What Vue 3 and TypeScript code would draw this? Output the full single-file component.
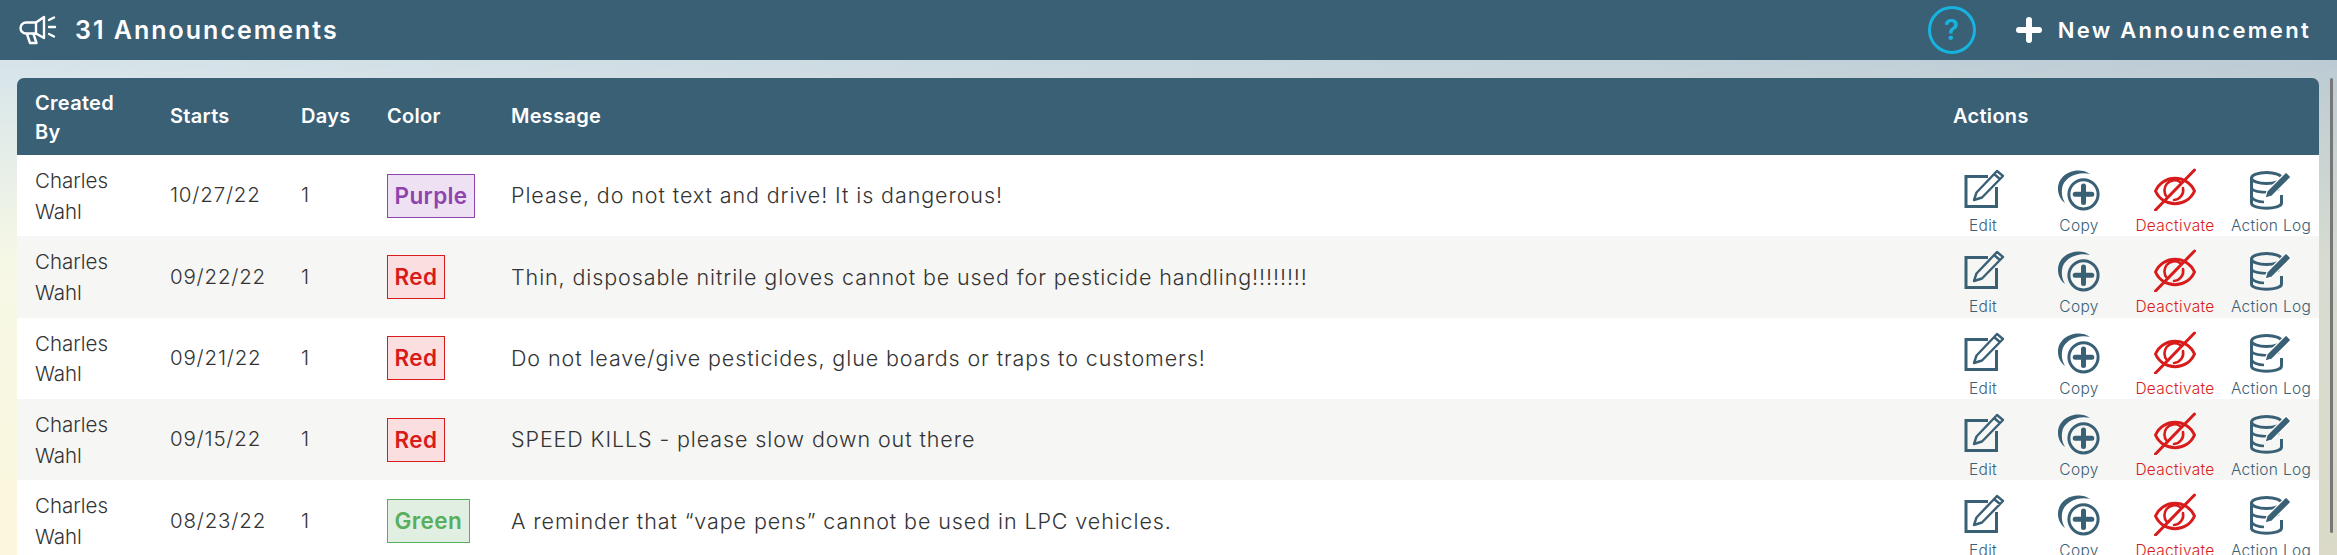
<script setup lang="ts">
interface Announcement {
  by: string;
  starts: string;
  days: number;
  color: "Purple" | "Red" | "Green";
  message: string;
}

const rows: Announcement[] = [
  { by: "Charles Wahl", starts: "10/27/22", days: 1, color: "Purple", message: "Please, do not text and drive! It is dangerous!" },
  { by: "Charles Wahl", starts: "09/22/22", days: 1, color: "Red", message: "Thin, disposable nitrile gloves cannot be used for pesticide handling!!!!!!!!" },
  { by: "Charles Wahl", starts: "09/21/22", days: 1, color: "Red", message: "Do not leave/give pesticides, glue boards or traps to customers!" },
  { by: "Charles Wahl", starts: "09/15/22", days: 1, color: "Red", message: "SPEED KILLS - please slow down out there" },
  { by: "Charles Wahl", starts: "08/23/22", days: 1, color: "Green", message: "A reminder that “vape pens” cannot be used in LPC vehicles." },
];
</script>

<template>
  <div class="page">
    <header class="topbar">
      <div class="title">
        <svg class="megaphone" width="40" height="30" viewBox="0 0 40 30" fill="none" stroke="#fff" stroke-width="2.4" stroke-linejoin="round" stroke-linecap="round">
          <path d="M8 7.5 H18 L26 2 V23 L18 18.5 H8 A5.5 5.5 0 0 1 8 7.5 Z" />
          <path d="M18 7.5 V18.5" />
          <path d="M9 19 L12 28 H18.5 L15.5 19" />
          <path d="M31 5 L36 2.5 M31 12 H37 M31 19 L36 21.5" />
        </svg>
        <span>31 Announcements</span>
      </div>
      <div class="tools">
        <div class="help">?</div>
        <div class="new">
          <svg width="26" height="26" viewBox="0 0 26 26" stroke="#fff" stroke-width="6" stroke-linecap="round">
            <path d="M13 3 V23 M3 13 H23" />
          </svg>
          <span>New Announcement</span>
        </div>
      </div>
    </header>

    <main class="content">
      <table class="grid">
        <colgroup>
          <col class="c-by" />
          <col class="c-starts" />
          <col class="c-days" />
          <col class="c-color" />
          <col />
          <col class="c-actions" />
        </colgroup>
        <thead>
          <tr>
            <th class="by">Created By</th>
            <th>Starts</th>
            <th>Days</th>
            <th>Color</th>
            <th>Message</th>
            <th>Actions</th>
          </tr>
        </thead>
        <tbody>
          <tr v-for="(row, i) in rows" :key="i">
            <td class="by">{{ row.by }}</td>
            <td class="date">{{ row.starts }}</td>
            <td>{{ row.days }}</td>
            <td>
              <span class="badge" :class="row.color.toLowerCase()">{{ row.color }}</span>
            </td>
            <td class="msg">{{ row.message }}</td>
            <td class="actions-cell">
              <div class="actions">
                <div class="action">
                  <svg width="44" height="44" viewBox="0 0 44 44" fill="none" stroke="#3a6076">
                    <path d="M27 9.5 H5 V39.5 H35.5 V20" stroke-width="3" />
                    <path d="M13 33 L15.5 25.5 L36 4 L42 9 L21 30.5 Z M33 7 L39 12" stroke-width="2.4" stroke-linejoin="round" />
                  </svg>
                  <span>Edit</span>
                </div>
                <div class="action">
                  <svg width="44" height="44" viewBox="0 0 44 44" fill="none" stroke="#3a6076">
                    <circle cx="26.5" cy="27.3" r="14.6" stroke-width="3" />
                    <path d="M26.5 19 V35.6 M18.2 27.3 H34.8" stroke-width="5" stroke-linecap="round" />
                    <path d="M33 7 C22 -1 1 5 1 22 C1 28 4 33 8 36 C5 31 4.5 27 5 22 C6 11 20 4 33 7 Z" fill="#3a6076" stroke="none" />
                  </svg>
                  <span>Copy</span>
                </div>
                <div class="action danger">
                  <svg width="44" height="44" viewBox="0 0 44 44" fill="none" stroke="#d81b1b" stroke-linecap="round">
                    <path d="M2.5 24 C10 7 34 7 41.5 24 C34 41 10 41 2.5 24 Z" stroke-width="3" />
                    <path d="M14 30 A10 10 0 0 1 27 15" stroke-width="2.6" />
                    <path d="M30 21 A10 10 0 0 1 21 33" stroke-width="2.6" />
                    <path d="M2.5 43 L41.5 3" stroke-width="3" />
                  </svg>
                  <span>Deactivate</span>
                </div>
                <div class="action">
                  <svg width="44" height="44" viewBox="0 0 44 44" fill="none" stroke="#3a6076" stroke-width="3">
                    <ellipse cx="17.5" cy="11" rx="15" ry="5.5" />
                    <path d="M2.5 11 V36 C2.5 43 32.500 43 32.500 36 V28" />
                    <path d="M2.5 20 C2.5 26 22 27 30 22 M2.5 28.500 C2.5 33 10 35 15 35" stroke-width="2.6" />
                    <path d="M16 31 L18 24 L37 5 L42 10 L23 29 Z" fill="#3a6076" stroke="#fff" stroke-width="1.2" stroke-linejoin="round" />
                  </svg>
                  <span>Action Log</span>
                </div>
              </div>
            </td>
          </tr>
        </tbody>
      </table>
    </main>
    <div class="scrollbar"></div>
  </div>
</template>

<style>
html,
body {
  margin: 0;
  overflow: hidden;
}
</style>

<style scoped>
.page {
  position: relative;
  height: 100vh;
  overflow: hidden;
  font-family: Inter, "Noto Sans", sans-serif;
  color: #333;
  background:
    linear-gradient(to right, rgba(70, 90, 110, 0) 0%, rgba(70, 90, 110, 0.18) 100%),
    linear-gradient(to bottom, #d6e4ea 60px, #f6f8e6 260px, #fcf6dc 555px);
}
.topbar {
  height: 60px;
  background: #3a6076;
  color: #fff;
  display: flex;
  align-items: center;
  justify-content: space-between;
  padding: 0 26px 0 18px;
  font-weight: 600;
}
.title {
  display: flex;
  align-items: center;
  gap: 17px;
  font-size: 25px;
  letter-spacing: 2px;
}
.tools {
  display: flex;
  align-items: center;
}
.help {
  width: 42px;
  height: 42px;
  border: 3px solid #17b3df;
  border-radius: 50%;
  color: #17b3df;
  display: flex;
  align-items: center;
  justify-content: center;
  font-size: 28px;
  font-weight: 600;
  margin-right: 40px;
}
.new {
  display: flex;
  align-items: center;
  gap: 16px;
  font-size: 22px;
  letter-spacing: 2.3px;
}
.content {
  padding: 18px 18px 0 17px;
}
.grid {
  width: 2302px;
  table-layout: fixed;
  border-collapse: separate;
  border-spacing: 0;
  font-size: 20.5px;
}
.c-by {
  width: 135px;
}
.c-starts {
  width: 131px;
}
.c-days {
  width: 86px;
}
.c-color {
  width: 124px;
}
.c-actions {
  width: 384px;
}
th {
  background: #3a6076;
  color: #fff;
  font-weight: 600;
  font-size: 20px;
  letter-spacing: 0.3px;
  line-height: 29px;
  text-align: left;
  padding: 9.5px 18px;
}
th:first-child {
  border-top-left-radius: 7px;
}
th:last-child {
  border-top-right-radius: 7px;
}
th.by {
  padding: 10.5px 18px 8.5px;
}
td {
  height: 81.33px;
  box-sizing: border-box;
  padding: 10px 18px;
  line-height: 30.67px;
  font-weight: 300;
  vertical-align: middle;
  background: #fff;
}
td.by {
  padding: 11px 18px 9px;
}
.date {
  letter-spacing: 0.8px;
}
.msg {
  font-size: 21.5px;
  letter-spacing: 0.9px;
}
tbody tr:nth-child(even) td {
  background: #f6f6f4;
}
.badge {
  display: inline-block;
  padding: 0 6.5px;
  height: 44px;
  line-height: 41px;
  box-sizing: border-box;
  border: 1.5px solid;
  font-size: 22.5px;
  letter-spacing: 0.4px;
  font-weight: 600;
  vertical-align: middle;
}
.purple {
  color: #8e44ad;
  background: #efe1f4;
}
.red {
  color: #d81b1b;
  background: #fbdfe0;
}
.green {
  color: #57ae5b;
  background: #e0efe1;
}
.actions-cell {
  padding: 12px 0 0;
  vertical-align: top;
}
.actions {
  display: flex;
}
.action {
  width: 96px;
  display: flex;
  flex-direction: column;
  align-items: center;
  color: #3a6076;
  font-size: 15.5px;
  letter-spacing: 0.3px;
  font-weight: 300;
  line-height: 20px;
  white-space: nowrap;
}
.action span {
  margin-top: 5px;
}
.action svg {
  display: block;
}
.danger {
  color: #d81b1b;
}
.scrollbar {
  position: absolute;
  top: 78px;
  right: 4px;
  width: 3px;
  height: 455px;
  background: #777;
  border-radius: 2px;
}
</style>
